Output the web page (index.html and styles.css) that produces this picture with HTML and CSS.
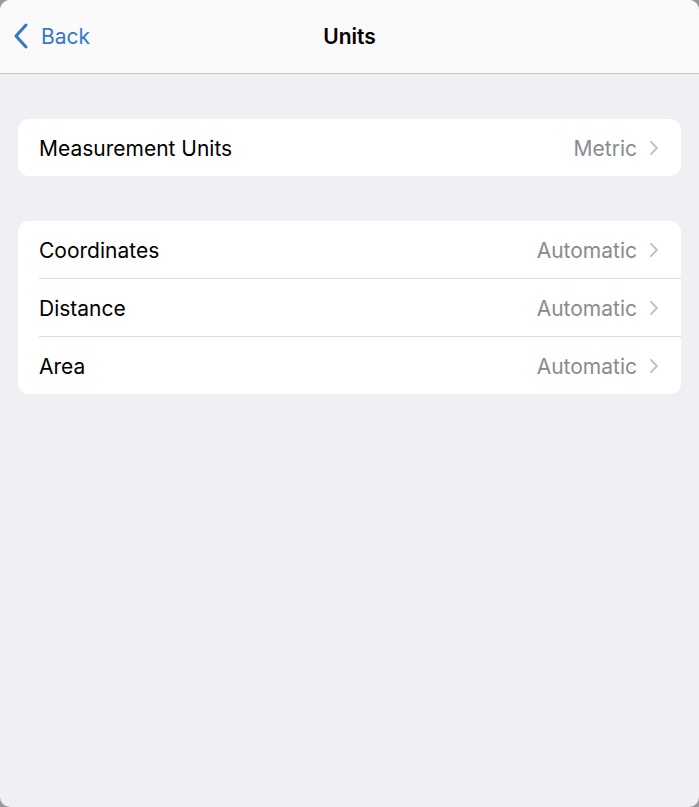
FILE: index.html
```html
<!DOCTYPE html>
<html>
<head>
<meta charset="utf-8">
<link rel="stylesheet" href="styles.css">
</head>
<body>
<div class="app">
  <header class="navbar">
    <a class="back">
      <svg class="back-icon" width="16" height="26" viewBox="0 0 16 26"><path d="M13 2 L3 13 L13 24" fill="none" stroke="#3478c6" stroke-width="3" stroke-linecap="round" stroke-linejoin="round"/></svg>
      <span>Back</span>
    </a>
    <h1 class="title">Units</h1>
  </header>
  <main class="content">
    <section class="group">
      <div class="row"><span class="label">Measurement Units</span><span class="value">Metric</span><svg class="chev" width="10" height="16" viewBox="0 0 10 16"><path d="M2 2 L8 8 L2 14" fill="none" stroke="#c4c4c7" stroke-width="2" stroke-linecap="round" stroke-linejoin="round"/></svg></div>
    </section>
    <section class="group">
      <div class="row"><span class="label">Coordinates</span><span class="value">Automatic</span><svg class="chev" width="10" height="16" viewBox="0 0 10 16"><path d="M2 2 L8 8 L2 14" fill="none" stroke="#c4c4c7" stroke-width="2" stroke-linecap="round" stroke-linejoin="round"/></svg></div>
      <div class="row"><span class="label">Distance</span><span class="value">Automatic</span><svg class="chev" width="10" height="16" viewBox="0 0 10 16"><path d="M2 2 L8 8 L2 14" fill="none" stroke="#c4c4c7" stroke-width="2" stroke-linecap="round" stroke-linejoin="round"/></svg></div>
      <div class="row"><span class="label">Area</span><span class="value">Automatic</span><svg class="chev" width="10" height="16" viewBox="0 0 10 16"><path d="M2 2 L8 8 L2 14" fill="none" stroke="#c4c4c7" stroke-width="2" stroke-linecap="round" stroke-linejoin="round"/></svg></div>
    </section>
  </main>
</div>
</body>
</html>
```
FILE: styles.css
```css
html, body {
  margin: 0;
  padding: 0;
  background: #9a9a9c;
}
body {
  font-family: "Inter", "Liberation Sans", sans-serif;
  -webkit-font-smoothing: antialiased;
}
.app {
  width: 699px;
  height: 807px;
  background: #f0eff4;
  border-radius: 10px;
  overflow: hidden;
  display: flex;
  flex-direction: column;
}
.navbar {
  height: 74px;
  background: #fafafa;
  border-bottom: 1px solid #c6c6c8;
  box-sizing: border-box;
  display: flex;
  align-items: center;
  justify-content: center;
  position: relative;
}
.back {
  position: absolute;
  left: 13px;
  top: 0;
  height: 73px;
  display: flex;
  align-items: center;
  gap: 12px;
  color: #3478c6;
  font-size: 21px;
}
.back-icon {
  margin-top: -1px;
}
.title {
  margin: 0;
  font-size: 21px;
  font-weight: 600;
  color: #000;
  margin-top: -1px;
}
.content {
  padding: 45px 18px 0;
  display: flex;
  flex-direction: column;
  gap: 45px;
}
.group {
  background: #fff;
  border-radius: 11px;
  overflow: hidden;
}
.row {
  height: 57px;
  margin-left: 21px;
  padding-right: 22px;
  padding-top: 1px;
  display: flex;
  align-items: center;
  font-size: 21px;
  box-sizing: border-box;
}
.row + .row {
  border-top: 1px solid #dcdce0;
  height: 58px;
}
.label {
  flex: 1;
  color: #000;
}
.value {
  color: #8a8a8e;
  margin-right: 12px;
}
.chev {
  display: block;
  margin-top: -1px;
}
```
